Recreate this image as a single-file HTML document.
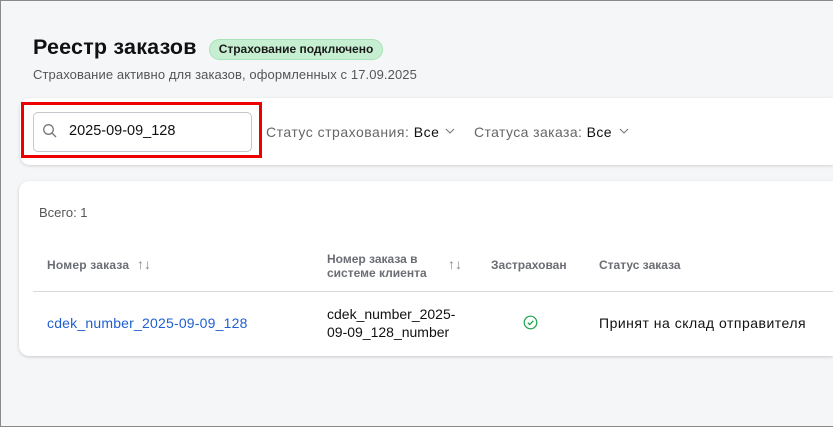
<!DOCTYPE html><html><head><style>
*{box-sizing:border-box;margin:0;padding:0}
body{width:833px;height:427px;overflow:hidden;background:#f5f6f8;font-family:"Liberation Sans",sans-serif;color:#1a1a1a;position:relative}
.abs{position:absolute;white-space:nowrap}
</style></head><body>
<div class="abs" style="left:0;top:0;width:833px;height:427px;border:1px solid #8a8a8a;border-right:none"></div>
<div class="abs" style="left:33px;top:35px;font-size:21.5px;font-weight:bold;color:#111;letter-spacing:0.2px">Реестр заказов</div>
<div class="abs" style="left:209px;top:39px;height:21px;width:174px;background:#c6efd1;border:1px solid #a8e2b8;border-radius:11px;font-size:12px;font-weight:bold;line-height:19px;text-align:center">Страхование подключено</div>
<div class="abs" style="left:33px;top:67px;font-size:13px;color:#555;letter-spacing:0.1px">Страхование активно для заказов, оформленных с 17.09.2025</div>
<div class="abs" style="left:20px;top:98px;width:813px;height:67px;background:#fff;border-radius:10px 0 0 10px;box-shadow:0 1px 3px rgba(0,0,0,.15)"></div>
<div class="abs" style="left:21px;top:102px;width:241px;height:56px;border:3px solid #e00"></div>
<div class="abs" style="left:33px;top:112px;width:219px;height:40px;border:1px solid #c4c6cc;border-radius:5px;background:#fff"></div>
<svg class="abs" style="left:42px;top:123px" width="16" height="16" viewBox="0 0 16 16"><circle cx="6.5" cy="6.5" r="4.8" fill="none" stroke="#777" stroke-width="1.3"/><path d="M10 10l4 4" stroke="#777" stroke-width="1.3"/></svg>
<div class="abs" style="left:69px;top:123px;font-size:14.5px;color:#111">2025-09-09_128</div>
<div class="abs" style="left:266px;top:124px;font-size:14px;color:#666;letter-spacing:0.5px">Статус страхования: <span style="color:#111">Все</span></div>
<svg class="abs" style="left:445px;top:128px" width="10" height="6" viewBox="0 0 10 6"><path d="M1 1l4 4 4-4" fill="none" stroke="#777" stroke-width="1.1"/></svg>
<div class="abs" style="left:474px;top:124px;font-size:14px;color:#666;letter-spacing:0.4px">Статуса заказа: <span style="color:#111">Все</span></div>
<svg class="abs" style="left:619px;top:128px" width="10" height="6" viewBox="0 0 10 6"><path d="M1 1l4 4 4-4" fill="none" stroke="#777" stroke-width="1.1"/></svg>
<div class="abs" style="left:19px;top:181px;width:814px;height:175px;background:#fff;border-radius:10px 0 0 10px;box-shadow:0 1px 3px rgba(0,0,0,.18)"></div>
<div class="abs" style="left:39px;top:205px;font-size:13px;color:#555">Всего: 1</div>
<div class="abs" style="left:47px;top:258px;font-size:12px;font-weight:bold;color:#6a6d73;letter-spacing:0.2px">Номер заказа</div>
<div class="abs" style="left:137px;top:256px;font-size:14px;color:#888">↑↓</div>
<div class="abs" style="left:327px;top:252px;font-size:12px;font-weight:bold;color:#6a6d73;line-height:14px">Номер заказа в<br>системе клиента</div>
<div class="abs" style="left:448px;top:256px;font-size:14px;color:#888">↑↓</div>
<div class="abs" style="left:491px;top:258px;font-size:12px;font-weight:bold;color:#6a6d73">Застрахован</div>
<div class="abs" style="left:599px;top:258px;font-size:12px;font-weight:bold;color:#6a6d73">Статус заказа</div>
<div class="abs" style="left:33px;top:291px;width:800px;height:1px;background:#d8d9dc"></div>
<div class="abs" style="left:47px;top:315px;font-size:14px;color:#1f5fd1;letter-spacing:0.2px">cdek_number_2025-09-09_128</div>
<div class="abs" style="left:327px;top:305px;font-size:14px;line-height:18px;color:#111">cdek_number_2025-<br>09-09_128_number</div>
<svg class="abs" style="left:523px;top:315px" width="15" height="15" viewBox="0 0 15 15"><circle cx="7.5" cy="7.5" r="6.3" fill="none" stroke="#1aa34a" stroke-width="1.2"/><path d="M4.8 7.7l1.9 1.9 3.6-3.8" fill="none" stroke="#1aa34a" stroke-width="1.2"/></svg>
<div class="abs" style="left:599px;top:315px;font-size:14px;color:#111;letter-spacing:0.5px">Принят на склад отправителя</div>
</body></html>
